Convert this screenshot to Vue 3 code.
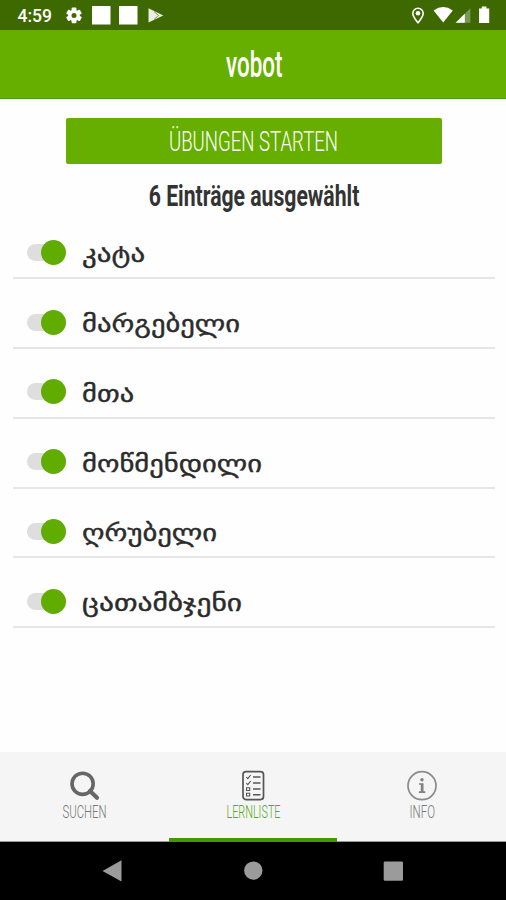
<template>
  <div class="screen">
    <div class="status-bar">
      <svg width="506" height="30" viewBox="0 0 506 30">
        <text class="clock" x="17.5" y="22" textLength="34.5" lengthAdjust="spacingAndGlyphs">4:59</text>
        <g transform="translate(74 15.4)" fill="#fff">
          <rect
            v-for="angle in [0, 60, 120]" :key="angle"
            x="-2.4" y="-7.8" width="4.8" height="15.6" rx="0.8"
            :transform="`rotate(${angle})`"
          />
          <circle r="5.7" />
          <circle r="2.5" fill="#3e6900" />
        </g>
        <rect x="92" y="6" width="18.5" height="18.5" fill="#fff" />
        <rect x="119" y="6" width="18.5" height="18.5" fill="#fff" />
        <path d="M148.5 8.3 L163.3 15.5 L148.5 22.5Z" fill="#e8eee0" />
        <path d="M154 11.5 L158.5 15.5 L154 19.5" fill="none" stroke="#6f8d48" stroke-width="0.9" />
        <path d="M418 22.8 C415.2 19.2 412.8 16.3 412.8 13.4 A5.2 5.2 0 0 1 423.2 13.4 C423.2 16.3 420.8 19.2 418 22.8Z" fill="none" stroke="#fff" stroke-width="1.6" />
        <circle cx="418" cy="13.3" r="2.3" fill="#fff" />
        <path d="M433.6 10.4 Q443.2 3.6 452.8 10.4 L443.2 22.4Z" fill="#fff" />
        <path d="M455.6 22.8 L470.4 8.2 V22.8Z" fill="#7b9755" />
        <path d="M455.6 22.8 L464.8 13.7 V22.8Z" fill="#fff" />
        <path d="M479 8.6 H481.8 V6.6 H486.4 V8.6 H489.2 V23 H479Z" fill="#fff" />
      </svg>
    </div>

    <header class="header">
      <svg width="64" height="44">
        <text class="title" x="5" y="35.3" textLength="56.5" lengthAdjust="spacingAndGlyphs">vobot</text>
      </svg>
    </header>

    <main class="content">
      <button class="start">
        <svg width="376" height="46">
          <text x="103" y="33" textLength="169" lengthAdjust="spacingAndGlyphs">ÜBUNGEN STARTEN</text>
        </svg>
      </button>
      <h2 class="count">
        <svg width="220" height="44">
          <text x="5.8" y="31.5" textLength="210.5" lengthAdjust="spacingAndGlyphs">{{ entries.length }} Einträge ausgewählt</text>
        </svg>
      </h2>
      <ul class="entries">
        <li v-for="entry in entries" :key="entry.word" class="entry">
          <button
            class="toggle"
            :class="{ on: entry.selected }"
            @click="entry.selected = !entry.selected"
          />
          <svg class="word" width="240" height="44">
            <text x="2.1" y="31" :textLength="entry.width" lengthAdjust="spacingAndGlyphs">{{ entry.word }}</text>
          </svg>
        </li>
      </ul>
    </main>

    <nav class="tabs">
      <div
        v-for="tab in tabs" :key="tab.id"
        class="tab" :class="{ active: tab.id === activeTab }"
        @click="activeTab = tab.id"
      >
        <svg v-if="tab.id === 'search'" class="icon" width="32" height="32" fill="none" stroke="#666">
          <circle cx="14.6" cy="13.8" r="10.6" stroke-width="3.6" />
          <path d="M22 21 L29 27.8" stroke-width="4.2" stroke-linecap="round" />
        </svg>
        <svg v-else-if="tab.id === 'list'" class="icon" width="32" height="32" fill="none" stroke="#555">
          <rect x="6" y="1.6" width="20.5" height="28" rx="3" stroke-width="1.7" />
          <path d="M16 7 H23.5 M16 13 H23.5 M16 19 H23.5 M16 24.7 H23.5" stroke-width="1.4" />
          <path d="M9.3 7.2 L10.8 8.7 L13.7 5 M9.3 13.2 L10.8 14.7 L13.7 11 M9.5 17.7 H12.7 V20.5 H9.5Z M9.5 23.2 H12.7 V26 H9.5Z" stroke-width="1.1" />
        </svg>
        <svg v-else class="icon" width="32" height="32">
          <circle cx="16" cy="15.7" r="14" fill="none" stroke="#8a8a8a" stroke-width="1.7" />
          <circle cx="16" cy="9.7" r="1.7" fill="#808080" />
          <path d="M13 13.2 H17.5 V21.2 H19.3 V23 H12.9 V21.2 H14.8 V14.8 H13Z" fill="#808080" />
        </svg>
        <svg class="label" :width="tab.width + 6" height="22">
          <text x="3.5" y="16.2" :textLength="tab.width" lengthAdjust="spacingAndGlyphs">{{ tab.label }}</text>
        </svg>
      </div>
    </nav>

    <div class="system-nav">
      <svg width="506" height="58" fill="#9b9b9b">
        <path d="M102.5 29 L121.5 18.2 V39.6Z" />
        <circle cx="253.3" cy="28.6" r="9.2" />
        <rect x="383.7" y="19.5" width="19.3" height="19.3" rx="1.2" />
      </svg>
    </div>
  </div>
</template>

<script setup>
import { ref } from 'vue';

const entries = ref([
  { word: 'კატა', width: 63, selected: true },
  { word: 'მარგებელი', width: 158, selected: true },
  { word: 'მთა', width: 52, selected: true },
  { word: 'მოწმენდილი', width: 180, selected: true },
  { word: 'ღრუბელი', width: 135, selected: true },
  { word: 'ცათამბჯენი', width: 160, selected: true },
]);

const tabs = [
  { id: 'search', label: 'SUCHEN', width: 44 },
  { id: 'list', label: 'LERNLISTE', width: 54 },
  { id: 'info', label: 'INFO', width: 25.5 },
];
const activeTab = ref('list');
</script>

<style>
body {
  margin: 0;
}
</style>

<style scoped>
.screen {
  display: flex;
  flex-direction: column;
  width: 506px;
  height: 900px;
  overflow: hidden;
  background: #fefefe;
  font-family: Roboto, "Liberation Sans", sans-serif;
}

svg {
  display: block;
  flex-shrink: 0;
  overflow: visible;
}

.status-bar {
  height: 30px;
  background: #3e6900;
}

.clock {
  fill: #fff;
  font-size: 18.5px;
  font-weight: 500;
}

.header {
  display: flex;
  box-sizing: border-box;
  justify-content: center;
  height: 69px;
  padding-top: 12px;
  border-bottom: 1px solid #459d10;
  background: #66af00;
}

.title {
  fill: #fff;
  font-size: 36px;
  font-weight: 500;
}

.content {
  display: flex;
  flex: 1;
  flex-direction: column;
  align-items: center;
  padding-top: 19px;
}

.start {
  width: 376px;
  height: 46px;
  margin-left: 1px;
  padding: 0;
  border: 0;
  border-radius: 2px;
  background: #66af00;
}

.start text {
  fill: #fff;
  font-family: Roboto, sans-serif;
  font-size: 28.5px;
  font-weight: 300;
}

.count {
  height: 44px;
  margin: 10px 0 0;
}

.count text {
  fill: #333;
  font-size: 29.5px;
  font-weight: 700;
}

.entries {
  align-self: stretch;
  margin: -8.5px 11.5px 0 12.5px;
  padding: 0;
  list-style: none;
}

.entry {
  display: flex;
  box-sizing: border-box;
  align-items: flex-end;
  height: 69.8px;
  padding: 0 0 2px 14px;
  border-bottom: 2px solid #e6e6e6;
}

.toggle {
  display: flex;
  align-items: center;
  width: 39px;
  height: 17px;
  margin: 0 14px 14.5px 0.5px;
  padding: 0;
  border: 0;
  border-radius: 9px;
  background: #dedede;
}

.toggle::after {
  width: 25px;
  height: 25px;
  flex-shrink: 0;
  border-radius: 50%;
  background: #aaa;
  content: "";
}

.toggle.on {
  justify-content: flex-end;
}

.toggle.on::after {
  background: #60ac00;
}

.word text {
  fill: #2b2b2b;
  stroke: #2b2b2b;
  stroke-width: 0.4px;
  font-family: "DejaVu Sans", sans-serif;
  font-size: 23px;
}

.tabs {
  display: flex;
  height: 90px;
  background: #f5f5f5;
}

.tab {
  display: flex;
  box-sizing: border-box;
  flex: 1;
  flex-direction: column;
  align-items: center;
  padding-top: 18px;
  border-bottom: 1px solid #999;
}

.tab.active {
  border-bottom: 4px solid #429900;
}

.label text {
  fill: #777;
  font-size: 17.5px;
  font-weight: 300;
}

.active .label text {
  fill: #55aa20;
}

.system-nav {
  height: 58px;
  background: #000;
}
</style>
